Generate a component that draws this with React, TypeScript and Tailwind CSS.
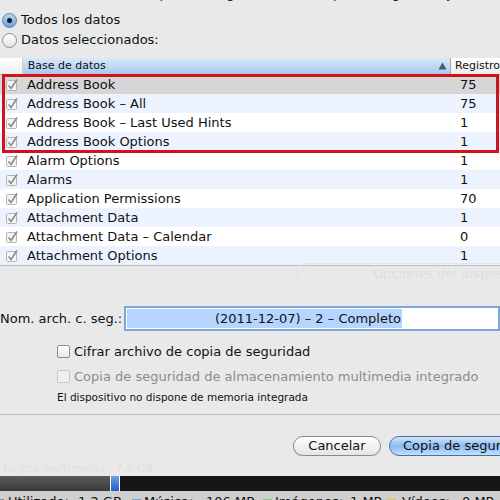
import React from "react";

const rows: [string, string][] = [
  ["Address Book", "75"],
  ["Address Book – All", "75"],
  ["Address Book – Last Used Hints", "1"],
  ["Address Book Options", "1"],
  ["Alarm Options", "1"],
  ["Alarms", "1"],
  ["Application Permissions", "70"],
  ["Attachment Data", "1"],
  ["Attachment Data – Calendar", "0"],
  ["Attachment Options", "1"],
];

function Check() {
  return (
    <svg width="14" height="14" viewBox="0 0 14 14">
      <rect x="1.5" y="2.5" width="10" height="10" rx="1" fill="#f4f4f4" stroke="#b4b4b4" />
      <path d="M3.5 7.5 L6 10.5 L12 1.5" fill="none" stroke="#8a8a8a" strokeWidth="1.6" />
    </svg>
  );
}

export default function App() {
  const font = { fontFamily: '"DejaVu Sans", "Liberation Sans", sans-serif' };
  return (
    <div className="relative w-[500px] h-[500px] overflow-hidden bg-[#e9e9e9] text-[#111]" style={font}>
      {/* cut-off top text */}
      <div className="h-[10px] overflow-hidden">
        <div className="-mt-[14px] pl-[18px] text-[13px] leading-[16px] whitespace-nowrap text-[#222]">
          Seleccione los datos que desea guardar en la copia de seguridad y
        </div>
      </div>
      {/* radios */}
      <div className="h-[20px] flex items-center pl-[2px]">
        <div className="w-[15px] h-[15px] rounded-full border border-[#5b7fb0] bg-gradient-to-b from-[#b8d4f2] to-[#6fa2dc] flex items-center justify-center">
          <div className="w-[5px] h-[5px] rounded-full bg-[#1a1a1a]" />
        </div>
        <span className="ml-[4px] text-[13px]">Todos los datos</span>
      </div>
      <div className="h-[20px] flex items-center pl-[2px]">
        <div className="w-[15px] h-[15px] rounded-full border border-[#8d8d8d] bg-gradient-to-b from-[#ffffff] to-[#e3e3e3]" />
        <span className="ml-[4px] text-[13px]">Datos seleccionados:</span>
      </div>
      <div className="h-[8px]" />
      {/* table */}
      <div className="relative bg-white border-b border-[#bdbdbd]">
        <div className="flex h-[17px] border-b border-[#b0b0b0] text-[11px]">
          <div className="w-[23px] bg-gradient-to-b from-[#ffffff] to-[#ececec] border-r border-[#cfcfcf]" />
          <div className="w-[433px] flex items-center pl-[5px] pr-[3px] bg-gradient-to-b from-[#d9e8f8] to-[#a9c9ee] border-r border-[#9aa9bb]">
            <span className="flex-1">Base de datos</span>
            <svg width="9" height="8" viewBox="0 0 9 8"><path d="M0.5 7.5 L4.5 0.5 L8.5 7.5 Z" fill="#4a5a70" /></svg>
          </div>
          <div className="flex-1 flex items-center pl-[4px] bg-gradient-to-b from-[#ffffff] to-[#eeeeee]">Registro</div>
        </div>
        {rows.map(([name, n], i) => {
          const bg = i === 0 ? "bg-[#d6d6d6]" : i % 2 === 1 ? "bg-[#edf3fe]" : "bg-white";
          return (
            <div key={name} className={`flex items-center h-[19px] text-[13px] ${bg}`}>
              <div className="w-[27px] pl-[5px] flex items-center"><Check /></div>
              <div className="w-[433px] whitespace-nowrap">{name}</div>
              <div className="flex-1">{n}</div>
            </div>
          );
        })}
        {/* red annotation box */}
        <div className="absolute left-[2px] top-[16px] w-[497px] h-[79px] border-[3px] border-[#d0121b]" />
      </div>

      {/* faint background items */}
      <div className="relative h-[40px]">
        <div className="absolute left-[296px] top-[-3px] w-[220px] h-[22px] rounded-[11px] border border-[#e4e4e4] text-[13px] text-[#dedede] pl-[76px] leading-[20px] whitespace-nowrap">
          Opciones del dispositivo
        </div>
      </div>

      {/* file name */}
      <div className="flex items-center h-[25px]">
        <span className="text-[13px] w-[124px] shrink-0 whitespace-nowrap">Nom. arch. c. seg.:</span>
        <div className="flex-1 h-[25px] border-[2px] border-[#7fa6d8] bg-white p-[1px] flex">
          <div className="w-[275px] shrink-0 bg-[#b5d5ff] text-[13px] text-right pr-[1px] leading-[19px] whitespace-nowrap">
            (2011-12-07) – 2 – Completo
          </div>
        </div>
      </div>

      <div className="h-[13px]" />
      <div className="flex items-center h-[15px] pl-[57px]">
        <div className="w-[13px] h-[13px] rounded-[2px] border border-[#8e8e8e] bg-gradient-to-b from-white to-[#e8e8e8]" />
        <span className="ml-[4px] text-[13px]">Cifrar archivo de copia de seguridad</span>
      </div>
      <div className="h-[10px]" />
      <div className="flex items-center h-[15px] pl-[57px]">
        <div className="w-[13px] h-[13px] rounded-[2px] border border-[#c6c6c6] bg-[#f0f0f0]" />
        <span className="ml-[4px] text-[13px] text-[#8c8c8c] whitespace-nowrap">Copia de seguridad de almacenamiento multimedia integrado</span>
      </div>
      <div className="h-[6px]" />
      <div className="h-[14px] pl-[57px] text-[10.5px] leading-[14px] whitespace-nowrap">El dispositivo no dispone de memoria integrada</div>

      <div className="h-[10px]" />
      <div className="h-px bg-[#b8b8b8]" />
      <div className="h-[21px]" />
      {/* buttons */}
      <div className="flex h-[20px] pl-[293px] gap-[8px] overflow-hidden">
        <div className="w-[88px] shrink-0 h-[20px] rounded-full border border-[#8a8a8a] bg-gradient-to-b from-white to-[#e6e6e6] text-[13px] flex items-center justify-center shadow-[0_1px_1px_rgba(0,0,0,0.15)]">
          Cancelar
        </div>
        <div className="w-[140px] shrink-0 h-[20px] rounded-full border border-[#4c6f9c] bg-gradient-to-b from-[#d3e6fb] via-[#8bbcf0] to-[#bfe0ff] text-[13px] pl-[13px] flex items-center whitespace-nowrap">
          Copia de seguridad
        </div>
      </div>
      <div className="h-[6px]" />
      <div className="h-[14px] pl-[2px] text-[11px] text-[#e0e0e0] leading-[14px] whitespace-nowrap">Tarjeta multimedia - 7,5 GB</div>

      {/* capacity bar */}
      <div className="flex h-[15px] bg-[#161616]">
        <div className="w-[110px] bg-gradient-to-b from-[#5a5a5a] to-[#3a3a3a]" />
        <div className="w-px bg-white" />
        <div className="w-[8px] bg-gradient-to-b from-[#6ba0ea] to-[#1f5fc8]" />
        <div className="w-px bg-white" />
      </div>
      <div className="h-[20px] bg-[#cfcfcf] flex items-start pt-[3px] text-[13px] leading-[16px] whitespace-nowrap">
        <span className="inline-block w-[4px] h-[8px] mt-[5px] bg-[#888]" />
        <span className="ml-[4px] w-[70px]">Utilizado:</span>
        <span className="w-[54px]">1,2 GB</span>
        <span className="inline-block w-[9px] h-[9px] mt-[5px] bg-[#6c9fe6]" />
        <span className="ml-[3px] w-[62px]">Música:</span>
        <span className="w-[57px]">106 MB</span>
        <span className="inline-block w-[9px] h-[9px] mt-[5px] bg-[#8ccc5c]" />
        <span className="ml-[3px] w-[75px]">Imágenes:</span>
        <span className="w-[37px]">1 MB</span>
        <span className="inline-block w-[9px] h-[9px] mt-[5px] bg-[#e8c64a]" />
        <span className="ml-[6px] w-[60px]">Vídeos:</span>
        <span>0 MB</span>
      </div>
    </div>
  );
}
